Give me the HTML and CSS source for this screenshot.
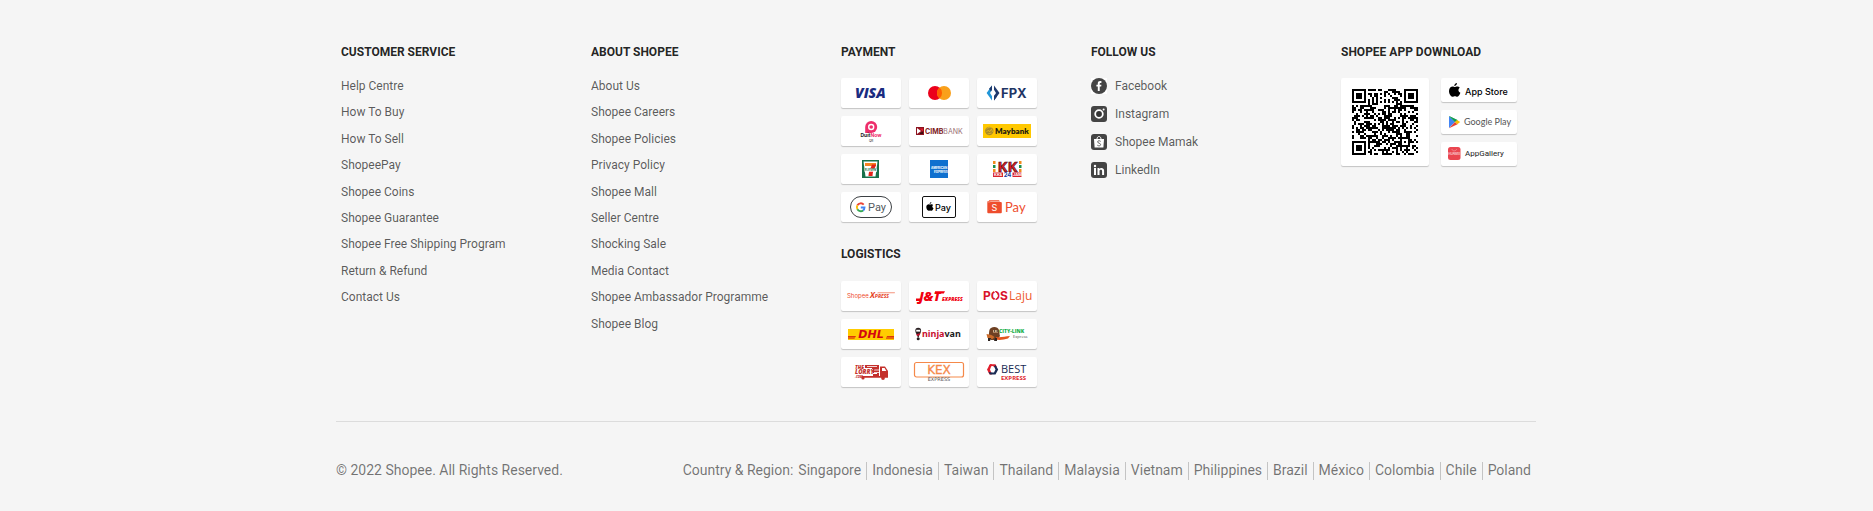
FILE: index.html
```html
<!DOCTYPE html>
<html lang="en">
<head>
<meta charset="utf-8">
<meta name="viewport" content="width=device-width, initial-scale=1">
<title>Shopee Malaysia</title>
<link rel="stylesheet" href="styles.css">
</head>
<body>
<footer class="footer">
  <div class="columns">
    <section class="column">
      <h2 class="title">CUSTOMER SERVICE</h2>
      <ul class="links">
        <li><a href="#">Help Centre</a></li>
        <li><a href="#">How To Buy</a></li>
        <li><a href="#">How To Sell</a></li>
        <li><a href="#">ShopeePay</a></li>
        <li><a href="#">Shopee Coins</a></li>
        <li><a href="#">Shopee Guarantee</a></li>
        <li><a href="#">Shopee Free Shipping Program</a></li>
        <li><a href="#">Return &amp; Refund</a></li>
        <li><a href="#">Contact Us</a></li>
      </ul>
    </section>

    <section class="column">
      <h2 class="title">ABOUT SHOPEE</h2>
      <ul class="links">
        <li><a href="#">About Us</a></li>
        <li><a href="#">Shopee Careers</a></li>
        <li><a href="#">Shopee Policies</a></li>
        <li><a href="#">Privacy Policy</a></li>
        <li><a href="#">Shopee Mall</a></li>
        <li><a href="#">Seller Centre</a></li>
        <li><a href="#">Shocking Sale</a></li>
        <li><a href="#">Media Contact</a></li>
        <li><a href="#">Shopee Ambassador Programme</a></li>
        <li><a href="#">Shopee Blog</a></li>
      </ul>
    </section>

    <section class="column">
      <h2 class="title">PAYMENT</h2>
      <ul class="cards">
        <li><a class="card" href="#"><svg viewBox="0 0 60 30"><text class="t-open heavy italic" x="14" y="20" font-size="14" fill="#1a2b80">VISA</text></svg></a></li>
        <li><a class="card" href="#" aria-label="Mastercard"><svg viewBox="0 0 60 30"><circle cx="26" cy="15" r="7" fill="#eb001b"/><circle cx="35" cy="15" r="7" fill="#f9a01b"/><path d="M30.500 9.600a7 7 0 0 1 0 10.800a7 7 0 0 1 0-10.800z" fill="#ff5f00"/></svg></a></li>
        <li><a class="card" href="#"><svg viewBox="0 0 60 30"><path d="M15 7.600v4.200l-2 3.200 2 3.200v4.200L9.600 15z" fill="#2196d8"/><path d="M17 7.600v4.200l2 3.200-2 3.200v4.200l5.500-7.400z" fill="#1f3a6e"/><path d="M12 10.800l3-3.200v4.200l-1 1.600zM17 18.200l1-1.600 2 1.800-3 4z" fill="#1f3a6e"/><text class="t-inter bold" x="24" y="20" font-size="13" fill="#1f3564">FPX</text></svg></a></li>
        <li><a class="card" href="#"><svg viewBox="0 0 60 30"><path d="M24.200 17V11a6 6 0 1 1 6 6z" fill="#ee2e6b"/><circle cx="30.200" cy="11" r="3.200" fill="#fff"/><circle cx="30.200" cy="11" r="1.800" fill="#ee2e6b"/><text class="t-inter bold" x="30" y="21" font-size="5" text-anchor="middle" fill="#222">Duit<tspan fill="#ee2e6b">Now</tspan></text><text class="t-inter" x="30" y="26" font-size="3" text-anchor="middle" fill="#222">QR</text></svg></a></li>
        <li><a class="card" href="#"><svg viewBox="0 0 60 30"><path d="M7 11h8v8H7z" fill="#8d1420"/><path d="M8 12l4 3-4 3z" fill="#fff"/><path d="M10.500 12.500H14v3z" fill="#e31b2d"/><path d="M11 17l3-1.500V18h-3z" fill="#3c0c10"/><text class="t-inter" x="16" y="18" font-size="7" fill="#7d1a24"><tspan class="bold">CIMB</tspan><tspan fill="#9c7377">BANK</tspan></text></svg></a></li>
        <li><a class="card" href="#"><svg viewBox="0 0 60 30"><path d="M6 8h48v14H6z" fill="#ffc800"/><circle cx="12.300" cy="15" r="4.200" fill="#a98a2a"/><path d="M9.500 13c1.500-2 4-2 5.500-1M9.500 16l2-2 1 2 2-3 1 3M10.500 18l4-1" fill="none" stroke="#e8bb20" stroke-width=".8"/><text class="t-lato heavy" x="18" y="18" font-size="8" fill="#1d1a10">Maybank</text></svg></a></li>
        <li><a class="card" href="#"><svg viewBox="0 0 60 30"><path d="M21 6h17v18H21z" fill="#17704a"/><path d="M22.500 7.500h14L34.500 22.500h-10z" fill="#fff"/><path d="M24 9h11v3h-11z" fill="#f58220"/><path d="M31 10.500h4c0 3-3 4-3.500 11.500h-4c0-5 2.500-8 3.500-11.500z" fill="#e2231a"/><path d="M23.500 14.500h12.500v3.200H23.500z" fill="#fff"/><text class="t-inter bold" x="29.500" y="17" font-size="3" text-anchor="middle" fill="#17704a">ELEVEN</text></svg></a></li>
        <li><a class="card" href="#"><svg viewBox="0 0 60 30"><path d="M21 6h18v18H21z" fill="#0f70cf"/><text class="t-inter bold" x="22" y="15" font-size="3" fill="#fff">AMERICAN</text><text class="t-inter bold" x="25" y="19" font-size="3" fill="#fff">EXPRESS</text></svg></a></li>
        <li><a class="card" href="#"><svg viewBox="0 0 60 30"><path d="M16 7h2.500v3H16zM42 7h2.500v3H42z" fill="#f28a1c"/><path d="M16 11h2.500v3H16zM42 11h2.500v3H42z" fill="#1b8d49"/><path d="M16 15h2.500v3H16zM42 15h2.500v3H42z" fill="#f28a1c"/><text class="t-open bold" x="30.500" y="18" font-size="15" text-anchor="middle" fill="#e01f26" stroke="#3a0d10" stroke-width=".6">KK</text><path d="M16 18.500h28.500V23H16z" fill="#d9232b"/><path d="M26 18h9.500v5.500H26z" fill="#fff"/><text class="t-inter bold" x="17" y="22" font-size="4" fill="#fff">KKs</text><text class="t-inter bold" x="30.500" y="23" font-size="6" text-anchor="middle" fill="#1d3fa0">24</text><text class="t-inter bold" x="36" y="22" font-size="4" fill="#fff">JAM</text></svg></a></li>
        <li><a class="card" href="#"><svg viewBox="0 0 60 30"><rect x="9.500" y="4.500" width="41" height="21" rx="10.500" fill="#fff" stroke="#3c4043"/><g fill="none" stroke-width="1.900"><path d="M22.700 12.600A3.900 3.900 0 0 0 16.400 13.300" stroke="#ea4335"/><path d="M16.400 13.300a3.900 3.900 0 0 0 0 4" stroke="#fbbc04"/><path d="M16.400 17.300a3.900 3.900 0 0 0 5.700 1.100" stroke="#34a853"/><path d="M22.100 18.400a3.900 3.900 0 0 0 1.400-2.900H19.800" stroke="#4285f4"/></g><text class="t-roboto" x="27" y="19" font-size="11" fill="#55595e">Pay</text></svg></a></li>
        <li><a class="card" href="#"><svg viewBox="0 0 60 30"><rect x="13.500" y="4.500" width="33" height="21" rx="1.500" fill="#fff" stroke="#111"/><use href="#apple" transform="translate(17.300 10) scale(.33)"/><text class="t-inter medium" x="26" y="19" font-size="9" fill="#000">Pay</text></svg></a></li>
        <li><a class="card" href="#"><svg viewBox="0 0 60 30"><path d="M12 8.300h10l1 1.200H12z" fill="#ee4d2d"/><rect x="10.300" y="10" width="14.500" height="11.300" rx="1" fill="#ee4d2d"/><path d="M10.300 11V9.200l3-.8v2z" fill="#f37a61"/><text class="t-inter" x="17.500" y="19" font-size="9" text-anchor="middle" fill="#fff">S</text><text class="t-lato" x="28" y="20" font-size="13" fill="#ee4d2d">Pay</text></svg></a></li>
      </ul>

      <h2 class="title title-next">LOGISTICS</h2>
      <ul class="cards">
        <li><a class="card" href="#"><svg viewBox="0 0 60 30"><text class="t-inter" x="6" y="17" font-size="6" fill="#ee4d2d">Shopee</text><text class="t-open bold italic" x="29" y="17" font-size="8" fill="#e5411f">X<tspan font-size="5">PRESS</tspan></text><path d="M37 11.300h17l-.3 1H36z" fill="#f4937c"/></svg></a></li>
        <li><a class="card" href="#"><svg viewBox="0 0 60 30"><path d="M7 17.500h5l-1 2.500H7zM26 10.200h10l-1.200 2.300H26z" fill="#f00010"/><text class="t-open heavy italic" x="10" y="20" font-size="13" fill="#f00010">J&amp;T</text><text class="t-open heavy italic" x="33" y="20" font-size="5" fill="#f00010">EXPRESS</text></svg></a></li>
        <li><a class="card" href="#"><svg viewBox="0 0 60 30"><text class="t-inter bold" x="6" y="19" font-size="12" fill="#d9142c">POS</text><path d="M17 9.500l3.500 5.300-3.500 5.200" fill="none" stroke="#fff" stroke-width="1"/><text class="t-open" x="32" y="19" font-size="12" fill="#ee5a2e">Laju</text></svg></a></li>
        <li><a class="card" href="#"><svg viewBox="0 0 60 30"><path d="M7 10h46v11H7z" fill="#fc0"/><path d="M7 17.200h8l-.7 1H7zM7 18.800h7l-.5.800H7zM46 17.200h7v1h-7.500zM45 18.800h8v.8h-8z" fill="#d40511"/><text class="t-dejavu bold italic" x="30" y="19" font-size="11" text-anchor="middle" fill="#d40511">DHL</text></svg></a></li>
        <li><a class="card" href="#"><svg viewBox="0 0 60 30"><path d="M9.200 8.800a2.900 2.900 0 0 1 2.900 3c0 2.600-2.200 4-2.400 6.500h-1c-.2-2.500-2.400-3.900-2.400-6.500a2.900 2.900 0 0 1 2.900-3z" fill="#2a2022"/><path d="M7.200 10.800h4v1.800h-4z" fill="#fff"/><path d="M7 15.500l4.500-1.500-1.500 2.700H8z" fill="#c8102e"/><circle cx="9.200" cy="19.800" r="1.500" fill="#2a2022"/><text class="t-noto bold" x="13" y="18" font-size="9" fill="#c8102e">ninja<tspan fill="#1c1c1c">van</tspan></text></svg></a></li>
        <li><a class="card" href="#"><svg viewBox="0 0 60 30"><path d="M14 9c3-2 7-1 8 2 1 2 0 4 1 6l-3 4h-6l-3-3c2-3 0-7 3-9z" fill="#6e4023"/><path d="M9.500 15l5 1 3 2-2 2-5-1z" fill="#c96a28"/><path d="M19 18c5 1 9-1 14-1l-2 2.500c-4 1-8 2-12 1z" fill="#e2571e"/><path d="M16 11h5v2.500h-5z" fill="#e9c39a"/><circle cx="17.500" cy="12" r=".8" fill="#111"/><circle cx="20.200" cy="12" r=".8" fill="#111"/><path d="M11 19h3l-1 3h-2zM18 19h2v3h-3z" fill="#2e2420"/><text class="t-open heavy" x="22" y="14" font-size="5" fill="#18b04a">CITY-LINK</text><text class="t-open" x="36" y="19" font-size="4" fill="#444">Express</text></svg></a></li>
        <li><a class="card" href="#"><svg viewBox="0 0 60 30"><path d="M24 8h14v11H32v-2h4v-1h-5v-5h-7zM39 9.500h5l3 4.500v6h-8zM21 19h26v1.800H21z" fill="#c4302b"/><path d="M41 11h2.600l1.700 3H41z" fill="#fff"/><path d="M26 9.500h10M33 13h5M33 15.500h5" stroke="#fff" stroke-width=".8"/><circle cx="22" cy="21" r="1.600" fill="#c4302b"/><circle cx="42" cy="21" r="1.900" fill="#c4302b"/><path d="M13 12h19v5H13z" fill="#fff"/><text class="t-open heavy italic" x="14" y="12" font-size="5" fill="#c4302b">THE</text><text class="t-open heavy italic" x="14" y="17" font-size="6" fill="#c4302b">LORRY</text><text class="t-open heavy italic" x="14" y="21" font-size="3" fill="#c4302b">.COM</text></svg></a></li>
        <li><a class="card" href="#"><svg viewBox="0 0 60 30"><rect x="5.500" y="5.500" width="49" height="14.500" rx="2" fill="#fff" stroke="#f5894a" stroke-width="1.200"/><text class="t-dejavu" x="30" y="17" font-size="12" text-anchor="middle" fill="#f5894a" stroke="#f5894a" stroke-width=".3">KEX</text><text class="t-dejavu" x="30" y="24" font-size="5" text-anchor="middle" fill="#555">EXPRESS</text></svg></a></li>
        <li><a class="card" href="#"><svg viewBox="0 0 60 30"><path d="M15 7.200h-2L10 12.500l2.500 5h2.500l-2-5z" fill="#e01f2d"/><path d="M11.500 9.500L13 7.200h5.500L20 10h-3l-1-1z" fill="#e01f2d"/><path d="M18.500 8l2.700 4.500-2.700 5H13l-1.500-2.500 4 .5h1.500l1.500-3-1.500-3z" fill="#1b2c55"/><text class="t-open" x="24" y="16" font-size="11" fill="#1b2c55">BEST</text><text class="t-open bold" x="24" y="23" font-size="6" fill="#e01f2d">EXPRESS</text></svg></a></li>
      </ul>
    </section>

    <section class="column">
      <h2 class="title">FOLLOW US</h2>
      <ul class="social">
        <li><a href="#"><svg viewBox="0 0 16 16"><path d="M0 0h16v16H0z" fill="#fff"/><circle cx="8" cy="8" r="8" fill="#444"/><path d="M6.800 13V8.600H5.400V6.700h1.400V5.500c0-1.700.9-2.400 2.300-2.400h1.300v1.800h-.9c-.6 0-.8.2-.8.8v1h1.700l-.2 1.900H8.700V13z" fill="#fff"/></svg>Facebook</a></li>
        <li><a href="#"><svg viewBox="0 0 16 16"><rect width="16" height="16" rx="3" fill="#444"/><circle cx="8" cy="8" r="3.800" fill="#333" stroke="#fff" stroke-width="1.800"/><circle cx="12.600" cy="3.500" r="1" fill="#fff"/></svg>Instagram</a></li>
        <li><a href="#"><svg viewBox="0 0 16 16"><rect width="16" height="16" rx="3" fill="#444"/><path d="M3 5h10l-.6 8.500H3.600z" fill="#fff"/><path d="M6 5c0-3.300 4-3.300 4 0" fill="none" stroke="#fff"/><path d="M9.700 7.400C8.500 6.300 6.500 6.700 6.600 8c.1 1.300 3 1 3 2.600 0 1.400-2 1.600-3.300.6" fill="none" stroke="#555" stroke-width=".9"/></svg>Shopee Mamak</a></li>
        <li><a href="#"><svg viewBox="0 0 16 16"><rect width="16" height="16" rx="3" fill="#444"/><circle cx="4" cy="4" r="1.200" fill="#fff"/><path d="M3 6h2v7H3zM6.500 6h1.900v1c1-1.700 4.700-1.600 4.700 1.600V13h-2V9.200c0-2-2.600-1.900-2.600 0V13h-2z" fill="#fff"/></svg>LinkedIn</a></li>
      </ul>
    </section>

    <section class="column">
      <h2 class="title">SHOPEE APP DOWNLOAD</h2>
      <div class="download">
        <a class="qr" href="#" aria-label="Download the app"><svg viewBox="0 0 33 33" shape-rendering="crispEdges"><path id="qr-modules" d=""/></svg></a>
        <div class="stores">
          <a class="store" href="#"><svg viewBox="0 0 76 24"><use href="#apple" transform="translate(8 5) scale(.52)"/><text class="t-inter medium" x="24" y="17" font-size="9" fill="#000">App Store</text></svg></a>
          <a class="store" href="#"><svg viewBox="0 0 76 24"><path d="M8 6v12l6-6z" fill="#4285f4"/><path d="M8 6l9 4.200-3 1.800z" fill="#34a853"/><path d="M8 6l6 6 2-2z" fill="#0f9d58"/><path d="M8 18.200l6-6.200 2.500 2.200z" fill="#ea4335"/><path d="M14 12l2-2 3.200 2-3 2.200z" fill="#fbbc04"/><text class="t-lato" x="23" y="15" font-size="9" fill="#555">Google Play</text></svg></a>
          <a class="store" href="#"><svg viewBox="0 0 76 24"><rect x="7" y="5" width="12.500" height="13" rx="2.500" fill="#ea4650"/><path d="M11 7c0 2.500 4.500 2.500 4.500 0" fill="none" stroke="#f59a9f" stroke-width=".7"/><text class="t-inter" x="13.200" y="13" font-size="3" text-anchor="middle" fill="#fff">HUAWEI</text><text class="t-roboto" x="24" y="14" font-size="8" fill="#222">AppGallery</text></svg></a>
        </div>
      </div>
    </section>
  </div>

  <div class="legal">
    <div>© 2022 Shopee. All Rights Reserved.</div>
    <nav class="regions">
      <span>Country &amp; Region:</span>
      <ul>
        <li><a href="#">Singapore</a></li>
        <li><a href="#">Indonesia</a></li>
        <li><a href="#">Taiwan</a></li>
        <li><a href="#">Thailand</a></li>
        <li><a href="#">Malaysia</a></li>
        <li><a href="#">Vietnam</a></li>
        <li><a href="#">Philippines</a></li>
        <li><a href="#">Brazil</a></li>
        <li><a href="#">México</a></li>
        <li><a href="#">Colombia</a></li>
        <li><a href="#">Chile</a></li>
        <li><a href="#">Poland</a></li>
      </ul>
    </nav>
  </div>
</footer>

<svg class="sprite" aria-hidden="true">
  <path id="apple" d="M15.300 0c.2 3-2.300 5.900-5.200 5.900C9.900 3 12.500.2 15.300 0zM20.800 9.300c-4 2.300-3.200 8 1.100 9.600-.9 2.800-3.300 7.300-5.900 7.500-1.700.1-2.500-1-4.600-1-2.100 0-2.900 1-4.500 1C3.300 26.500 0 20 0 15.300 0 8 6.200 5.400 9.400 7.200c1.500.7 2 .7 3.600 0 2.600-1.200 6.100-.6 7.800 2.100z"/>
</svg>
<script src="qr.js"></script>
</body>
</html>
```

FILE: styles.css
```css
* {
  box-sizing: border-box;
}

body {
  margin: 0;
  padding-right: 1px;
  background: #f5f5f5;
  color: rgba(0, 0, 0, 0.54);
  font-family: Roboto, "Liberation Sans", sans-serif;
  font-size: 14px;
}

ul {
  margin: 0;
  padding: 0;
  list-style: none;
}

a {
  color: inherit;
  text-decoration: none;
}

.footer {
  max-width: 1200px;
  margin: 0 auto;
  padding-top: 44px;
}

.columns {
  display: flex;
  flex-wrap: wrap;
  justify-content: space-between;
  padding-bottom: 34px;
}

.column {
  width: 200px;
  padding-left: 5px;
}

.title {
  margin: 0 0 18px;
  color: rgba(0, 0, 0, 0.87);
  font-size: 12px;
  font-weight: 700;
  line-height: 16px;
}

.title-next {
  margin: 24px 0 19px;
}

.links {
  display: grid;
  gap: 12px;
  padding-top: 1px;
  color: rgba(0, 0, 0, 0.65);
  font-size: 12px;
  line-height: 1.2;
}

.links a {
  display: block;
  overflow: hidden;
  text-overflow: ellipsis;
  white-space: nowrap;
}

.cards {
  display: grid;
  grid-template-columns: repeat(3, 60px);
  gap: 8px;
}

.card,
.qr,
.store {
  display: block;
  border-radius: 2px;
  background: #fff;
  box-shadow: 0 1px 1px rgba(0, 0, 0, 0.2);
}

.card svg,
.store svg,
.qr svg {
  display: block;
  width: 100%;
}

.social {
  display: grid;
  gap: 12px;
  color: rgba(0, 0, 0, 0.65);
  font-size: 12px;
  line-height: 16px;
}

.social a {
  display: flex;
  align-items: center;
  gap: 8px;
}

.social svg {
  width: 16px;
  height: 16px;
}

.download {
  display: flex;
  gap: 12px;
}

.qr {
  width: 88px;
  padding: 11px;
}

.stores {
  display: grid;
  gap: 8px;
  width: 76px;
}

.legal {
  display: flex;
  flex-wrap: wrap;
  justify-content: space-between;
  padding: 40px 0 31px;
  border-top: 1px solid rgba(0, 0, 0, 0.1);
  line-height: 16px;
}

.regions,
.regions ul {
  display: flex;
  flex-wrap: wrap;
}

.regions li {
  padding: 0 5px 2px;
}

.regions li + li {
  border-left: 1px solid rgba(0, 0, 0, 0.2);
}

.sprite {
  position: absolute;
  width: 0;
  height: 0;
}

.t-open {
  font-family: "Open Sans", sans-serif;
}

.t-inter {
  font-family: Inter, sans-serif;
}

.t-lato {
  font-family: Lato, sans-serif;
}

.t-roboto {
  font-family: Roboto, sans-serif;
}

.t-noto {
  font-family: "Noto Sans", sans-serif;
}

.t-dejavu {
  font-family: "DejaVu Sans", sans-serif;
}

.medium {
  font-weight: 500;
}

.bold {
  font-weight: 700;
}

.heavy {
  font-weight: 800;
}

.italic {
  font-style: italic;
}
```

FILE: qr.js
```js
// Draws the 33 x 33 module code: finders, timing lines, alignment mark and data.
const SIZE = 33;
let seed = 20227;

function nextBit() {
  seed = (seed * 1103515245 + 12345) % 2147483648;
  return seed / 2147483648 < 0.52;
}

function ring(x, y, cx, cy, dark) {
  const distance = Math.max(Math.abs(x - cx), Math.abs(y - cy));
  return dark.includes(distance);
}

function moduleAt(x, y) {
  const data = nextBit();
  for (const [cx, cy] of [[3, 3], [29, 3], [3, 29]]) {
    if (Math.abs(x - cx) <= 4 && Math.abs(y - cy) <= 4) {
      return ring(x, y, cx, cy, [0, 1, 3]);
    }
  }
  if (Math.abs(x - 26) <= 2 && Math.abs(y - 26) <= 2) {
    return ring(x, y, 26, 26, [0, 2]);
  }
  if (x === 6 || y === 6) {
    return (x + y) % 2 === 0;
  }
  return data;
}

let path = "";
for (let y = 0; y < SIZE; y++) {
  for (let x = 0; x < SIZE; x++) {
    if (moduleAt(x, y)) path += `M${x} ${y}h1v1h-1z`;
  }
}
document.getElementById("qr-modules").setAttribute("d", path);
```
